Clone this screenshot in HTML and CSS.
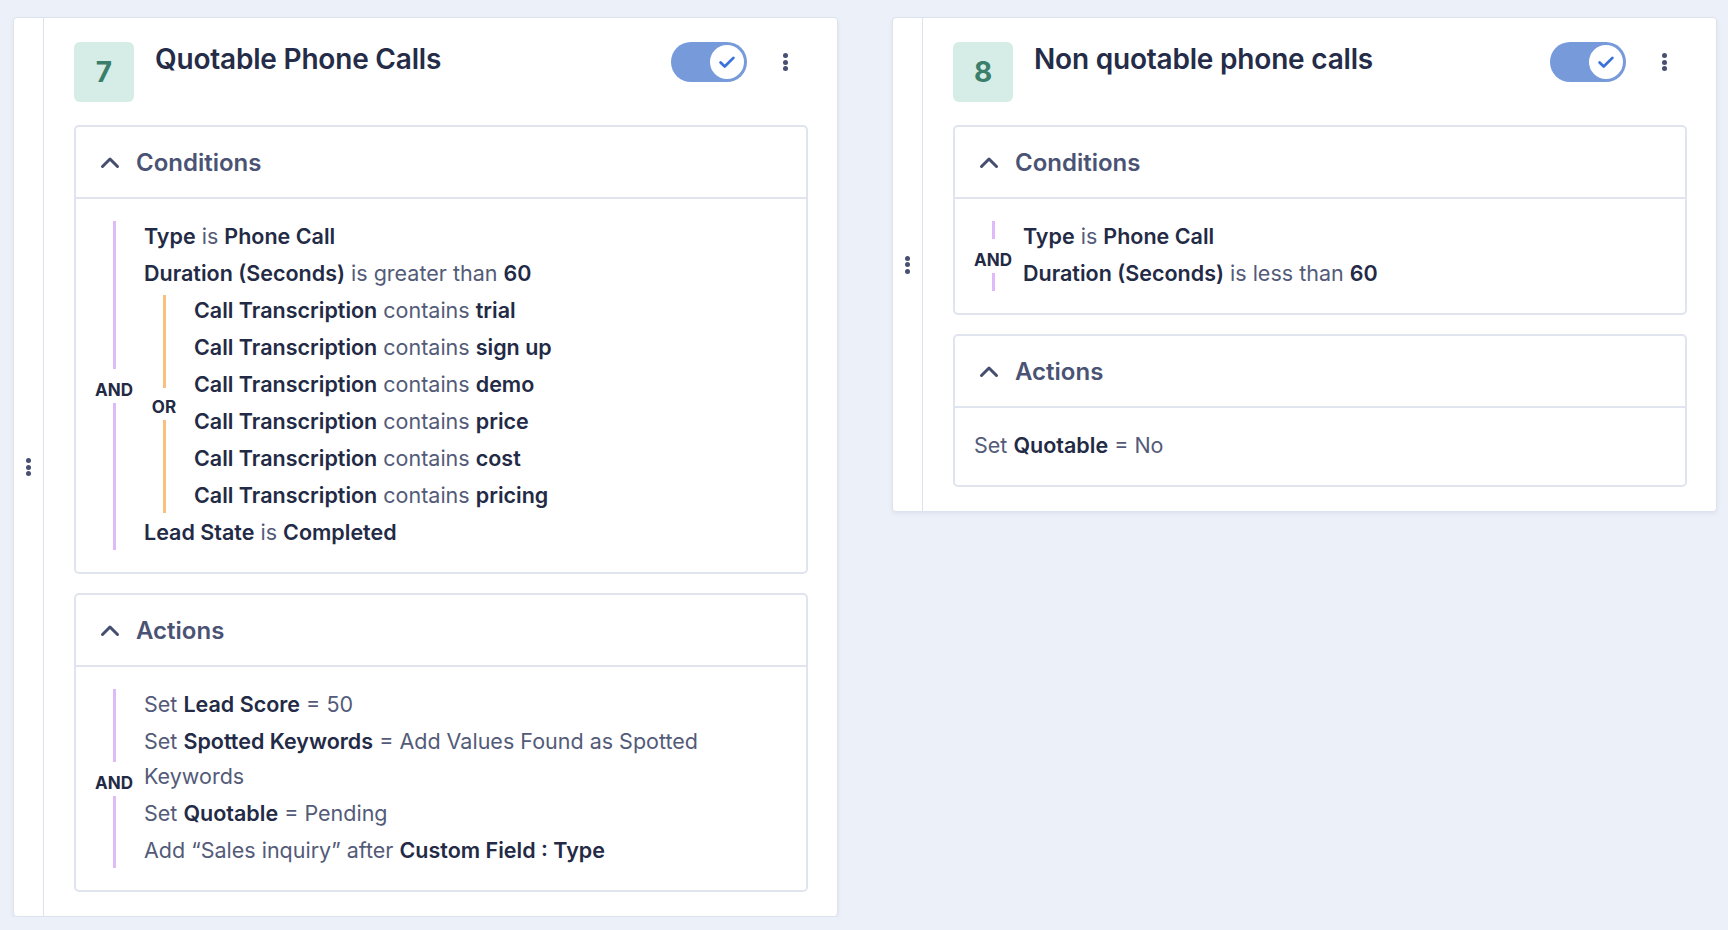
FILE: index.html
```html
<!DOCTYPE html>
<html lang="en">
<head>
<meta charset="utf-8">
<title>Rules</title>
<link rel="stylesheet" href="styles.css">
</head>
<body>
<div class="board">

  <section class="card">
    <div class="handle"><span class="dots"><i></i><i></i><i></i></span></div>
    <div class="card-main">
      <header class="card-head">
        <div class="badge">7</div>
        <h2 class="title">Quotable Phone Calls</h2>
        <div class="toggle"><span class="knob"><svg viewBox="0 0 24 24" width="22" height="22"><path d="M5 12.5l4.5 4.5L19 7.5" fill="none" stroke="#3b72d9" stroke-width="3" stroke-linecap="round" stroke-linejoin="round"/></svg></span></div>
        <div class="more"><i></i><i></i><i></i></div>
      </header>

      <div class="box">
        <div class="box-head"><svg class="caret" viewBox="0 0 20 14" width="20" height="14"><path d="M2.5 11.5L10 4l7.5 7.5" fill="none" stroke="#454e6f" stroke-width="3" stroke-linecap="round" stroke-linejoin="round"/></svg><span>Conditions</span></div>
        <div class="box-body">
          <div class="group">
            <div class="conn and"><span class="ln"></span><span class="lbl">AND</span><span class="ln"></span></div>
            <div class="items">
              <div class="row"><b>Type</b> is <b>Phone Call</b></div>
              <div class="row"><b>Duration (Seconds)</b> is greater than <b>60</b></div>
              <div class="group">
                <div class="conn or"><span class="ln"></span><span class="lbl">OR</span><span class="ln"></span></div>
                <div class="items">
                  <div class="row"><b>Call Transcription</b> contains <b>trial</b></div>
                  <div class="row"><b>Call Transcription</b> contains <b>sign up</b></div>
                  <div class="row"><b>Call Transcription</b> contains <b>demo</b></div>
                  <div class="row"><b>Call Transcription</b> contains <b>price</b></div>
                  <div class="row"><b>Call Transcription</b> contains <b>cost</b></div>
                  <div class="row"><b>Call Transcription</b> contains <b>pricing</b></div>
                </div>
              </div>
              <div class="row"><b>Lead State</b> is <b>Completed</b></div>
            </div>
          </div>
        </div>
      </div>

      <div class="box">
        <div class="box-head"><svg class="caret" viewBox="0 0 20 14" width="20" height="14"><path d="M2.5 11.5L10 4l7.5 7.5" fill="none" stroke="#454e6f" stroke-width="3" stroke-linecap="round" stroke-linejoin="round"/></svg><span>Actions</span></div>
        <div class="box-body">
          <div class="group">
            <div class="conn and"><span class="ln"></span><span class="lbl">AND</span><span class="ln"></span></div>
            <div class="items narrow">
              <div class="row">Set <b>Lead Score</b> = 50</div>
              <div class="row">Set <b>Spotted Keywords</b> = Add Values Found as Spotted Keywords</div>
              <div class="row">Set <b>Quotable</b> = Pending</div>
              <div class="row">Add “Sales inquiry” after <b>Custom Field : Type</b></div>
            </div>
          </div>
        </div>
      </div>
    </div>
  </section>

  <section class="card">
    <div class="handle"><span class="dots"><i></i><i></i><i></i></span></div>
    <div class="card-main">
      <header class="card-head">
        <div class="badge">8</div>
        <h2 class="title">Non quotable phone calls</h2>
        <div class="toggle"><span class="knob"><svg viewBox="0 0 24 24" width="22" height="22"><path d="M5 12.5l4.5 4.5L19 7.5" fill="none" stroke="#3b72d9" stroke-width="3" stroke-linecap="round" stroke-linejoin="round"/></svg></span></div>
        <div class="more"><i></i><i></i><i></i></div>
      </header>

      <div class="box">
        <div class="box-head"><svg class="caret" viewBox="0 0 20 14" width="20" height="14"><path d="M2.5 11.5L10 4l7.5 7.5" fill="none" stroke="#454e6f" stroke-width="3" stroke-linecap="round" stroke-linejoin="round"/></svg><span>Conditions</span></div>
        <div class="box-body">
          <div class="group">
            <div class="conn and"><span class="ln"></span><span class="lbl">AND</span><span class="ln"></span></div>
            <div class="items">
              <div class="row"><b>Type</b> is <b>Phone Call</b></div>
              <div class="row"><b>Duration (Seconds)</b> is less than <b>60</b></div>
            </div>
          </div>
        </div>
      </div>

      <div class="box">
        <div class="box-head"><svg class="caret" viewBox="0 0 20 14" width="20" height="14"><path d="M2.5 11.5L10 4l7.5 7.5" fill="none" stroke="#454e6f" stroke-width="3" stroke-linecap="round" stroke-linejoin="round"/></svg><span>Actions</span></div>
        <div class="box-body">
          <div class="items plain">
            <div class="row">Set <b>Quotable</b> = No</div>
          </div>
        </div>
      </div>
    </div>
  </section>

</div>
</body>
</html>
```

FILE: styles.css
```css
* { box-sizing: border-box; }

html, body {
  margin: 0;
  padding: 0;
  background: #ecf0f8;
  font-family: Inter, "Noto Sans", "Liberation Sans", sans-serif;
  color: #535b78;
}

.board {
  display: flex;
  align-items: flex-start;
  gap: 54px;
  padding: 17px 0 0 13px;
}

.card {
  width: 825px;
  flex: none;
  display: flex;
  background: #fff;
  border: 1px solid #dde3ee;
  border-radius: 4px;
  box-shadow: 0 2px 4px rgba(60, 80, 130, 0.08);
}

.handle {
  width: 30px;
  flex: none;
  border-right: 1px solid #dde3ee;
  display: flex;
  align-items: center;
  justify-content: center;
}

.dots, .more {
  display: flex;
  flex-direction: column;
  gap: 1.5px;
}
.dots i, .more i {
  display: block;
  width: 5px;
  height: 5px;
  border-radius: 50%;
  background: #474f72;
}

.card-main {
  flex: 1;
  padding: 24px 29px 24px 30px;
  display: flex;
  flex-direction: column;
  gap: 19px;
}

.card-head {
  display: flex;
  align-items: flex-start;
  height: 64px;
}

.badge {
  width: 60px;
  height: 60px;
  flex: none;
  border-radius: 6px;
  background: #d5ede6;
  color: #3b7e6b;
  font-size: 28px;
  font-weight: 700;
  display: flex;
  align-items: center;
  justify-content: center;
}

.title {
  flex: 1;
  margin: 0 0 0 21px;
  font-size: 28px;
  line-height: 34px;
  font-weight: 600;
  color: #252c48;
  letter-spacing: -0.2px;
}

.toggle {
  width: 76px;
  height: 40px;
  flex: none;
  border-radius: 20px;
  background: #779adb;
  display: flex;
  align-items: center;
  justify-content: flex-end;
  padding-right: 1px;
}
.knob {
  width: 38px;
  height: 38px;
  border-radius: 50%;
  background: #fff;
  border: 2px solid #779adb;
  display: flex;
  align-items: center;
  justify-content: center;
}

.more {
  margin: 11px 20px 0 36px;
}

.box {
  border: 2px solid #dfe4ee;
  border-radius: 5px;
  background: #fff;
}

.box-head {
  height: 72px;
  display: flex;
  align-items: center;
  gap: 16px;
  padding-left: 24px;
  border-bottom: 2px solid #dfe4ee;
  font-size: 24px;
  font-weight: 600;
  color: #4a5374;
}
.caret { flex: none; }

.box-body {
  padding: 20px 20px 22px 18px;
}

.group {
  display: flex;
  align-items: stretch;
}

.conn {
  width: 40px;
  flex: none;
  display: flex;
  flex-direction: column;
  align-items: center;
  padding-top: 2px;
}
.conn .ln {
  flex: 1;
  width: 3px;
  background: #dfbaf8;
}
.conn.or .ln { background: #f9c17f; }
.conn .lbl {
  font-size: 17px;
  font-weight: 700;
  color: #232a45;
  line-height: 16px;
  padding: 7px 0 5px;
  margin-top: 6px;
}
.conn.or .lbl { margin-top: 4px; }

.items {
  flex: 1;
  padding-left: 10px;
  display: flex;
  flex-direction: column;
  gap: 2px;
}
.items.plain { padding-left: 1px; }
.items.narrow { max-width: 620px; flex: none; }

.row {
  font-size: 21.5px;
  line-height: 35px;
  color: #535b78;
}
.row b {
  font-weight: 600;
  color: #232a45;
}
```
